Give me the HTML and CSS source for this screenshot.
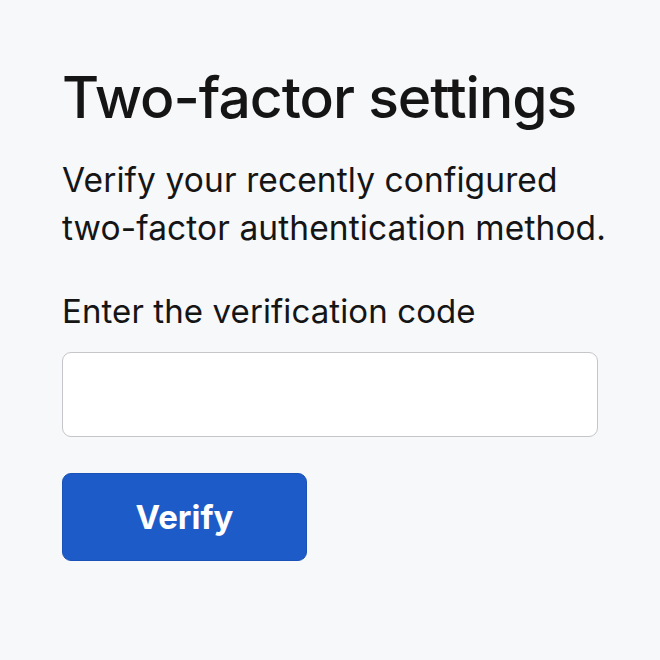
FILE: index.html
```html
<!DOCTYPE html>
<html>
	<head>
		<title>Two-factor settings</title>
		<link rel="stylesheet" href="styles.css">
	</head>
	<body>
		<div class="panel">
			<h1>Two-factor settings</h1>
			<p class="intro">Verify your recently configured<br>two-factor authentication method.</p>
			<form class="verify-form" onsubmit="event.preventDefault();">
				<label for="code">Enter the verification code</label>
				<input type="text" id="code" name="code">
				<button type="submit">Verify</button>
			</form>
		</div>
	</body>
</html>
```
FILE: styles.css
```css
body{
	margin:0;
	background-color:#f7f8fa;
	font-family:Inter, "Noto Sans", sans-serif;
	color:#151515;
}
.panel{
	padding:66px 0 0 62px;
	width:590px;
}
h1{
	margin:0;
	font-size:57px;
	font-weight:500;
	line-height:64px;
	letter-spacing:-1px;
}
.intro{
	margin:26px 0 0 0;
	font-size:33.5px;
	line-height:48px;
	letter-spacing:0.1px;
}
.verify-form{
	display:flex;
	flex-direction:column;
	align-items:flex-start;
}
label{
	margin-top:39px;
	font-size:33px;
	line-height:40px;
	letter-spacing:0.1px;
}
input[type="text"]{
	box-sizing:border-box;
	width:536px;
	height:85px;
	margin-top:21px;
	background-color:#ffffff;
	border:1.5px solid #c6c6ca;
	border-radius:9px;
	font-size:28px;
	padding:0 16px;
}
button{
	margin-top:36px;
	width:245px;
	height:88px;
	background-color:#1d5bc8;
	color:#ffffff;
	border:1px solid #1a52b8;
	border-radius:9px;
	font-family:Inter, "Noto Sans", sans-serif;
	font-size:33px;
	font-weight:700;
}
```
